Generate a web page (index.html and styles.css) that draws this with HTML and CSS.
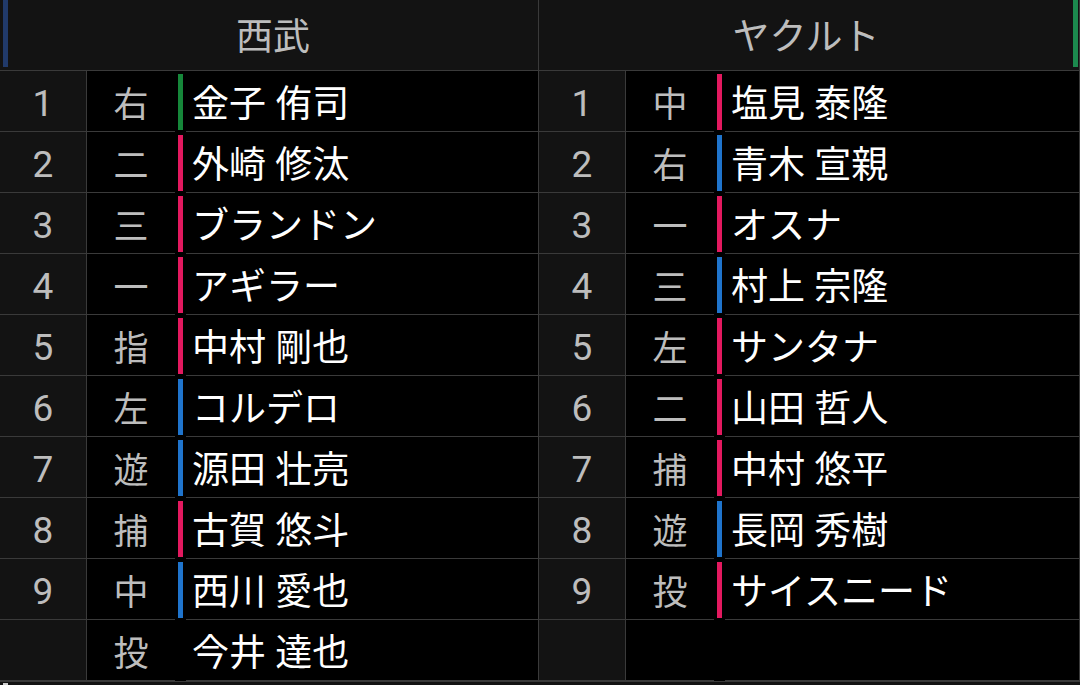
FILE: index.html
```html
<!DOCTYPE html>
<html lang="ja">
<head>
<meta charset="utf-8">
<link rel="stylesheet" href="styles.css">
</head>
<body>
<div class="board">
  <section class="team team-left">
    <header class="team-head">
      <span class="head-bar head-bar-navy"></span>
      <span class="head-name">西武</span>
    </header>
    <div class="row"><span class="num">1</span><span class="pos">右</span><span class="bar-cell"><i class="bar green"></i></span><span class="name">金子 侑司</span></div>
    <div class="row"><span class="num">2</span><span class="pos">二</span><span class="bar-cell"><i class="bar pink"></i></span><span class="name">外崎 修汰</span></div>
    <div class="row"><span class="num">3</span><span class="pos">三</span><span class="bar-cell"><i class="bar pink"></i></span><span class="name">ブランドン</span></div>
    <div class="row"><span class="num">4</span><span class="pos">一</span><span class="bar-cell"><i class="bar pink"></i></span><span class="name">アギラー</span></div>
    <div class="row"><span class="num">5</span><span class="pos">指</span><span class="bar-cell"><i class="bar pink"></i></span><span class="name">中村 剛也</span></div>
    <div class="row"><span class="num">6</span><span class="pos">左</span><span class="bar-cell"><i class="bar blue"></i></span><span class="name">コルデロ</span></div>
    <div class="row"><span class="num">7</span><span class="pos">遊</span><span class="bar-cell"><i class="bar blue"></i></span><span class="name">源田 壮亮</span></div>
    <div class="row"><span class="num">8</span><span class="pos">捕</span><span class="bar-cell"><i class="bar pink"></i></span><span class="name">古賀 悠斗</span></div>
    <div class="row"><span class="num">9</span><span class="pos">中</span><span class="bar-cell"><i class="bar blue"></i></span><span class="name">西川 愛也</span></div>
    <div class="row"><span class="num"></span><span class="pos">投</span><span class="bar-cell"></span><span class="name">今井 達也</span></div>
  </section>
  <section class="team team-right">
    <header class="team-head">
      <span class="head-name">ヤクルト</span>
      <span class="head-bar head-bar-green"></span>
    </header>
    <div class="row"><span class="num">1</span><span class="pos">中</span><span class="bar-cell"><i class="bar pink"></i></span><span class="name">塩見 泰隆</span></div>
    <div class="row"><span class="num">2</span><span class="pos">右</span><span class="bar-cell"><i class="bar blue"></i></span><span class="name">青木 宣親</span></div>
    <div class="row"><span class="num">3</span><span class="pos">一</span><span class="bar-cell"><i class="bar pink"></i></span><span class="name">オスナ</span></div>
    <div class="row"><span class="num">4</span><span class="pos">三</span><span class="bar-cell"><i class="bar blue"></i></span><span class="name">村上 宗隆</span></div>
    <div class="row"><span class="num">5</span><span class="pos">左</span><span class="bar-cell"><i class="bar pink"></i></span><span class="name">サンタナ</span></div>
    <div class="row"><span class="num">6</span><span class="pos">二</span><span class="bar-cell"><i class="bar pink"></i></span><span class="name">山田 哲人</span></div>
    <div class="row"><span class="num">7</span><span class="pos">捕</span><span class="bar-cell"><i class="bar pink"></i></span><span class="name">中村 悠平</span></div>
    <div class="row"><span class="num">8</span><span class="pos">遊</span><span class="bar-cell"><i class="bar blue"></i></span><span class="name">長岡 秀樹</span></div>
    <div class="row"><span class="num">9</span><span class="pos">投</span><span class="bar-cell"><i class="bar pink"></i></span><span class="name">サイスニード</span></div>
    <div class="row"><span class="num"></span><span class="pos"></span><span class="bar-cell"></span><span class="name"></span></div>
  </section>
</div>
<div class="foot"><span class="foot-mark"></span></div>
</body>
</html>
```

FILE: styles.css
```css
html, body {
  margin: 0;
  padding: 0;
}

body {
  width: 1080px;
  height: 685px;
  overflow: hidden;
  background: #131313;
  font-family: Roboto, "Noto Sans CJK JP", sans-serif;
}

.board {
  display: flex;
  background: #000;
}

.team {
  display: flex;
  flex-direction: column;
  border-right: 1px solid #3a3a3a;
}

.team-left {
  width: 538px;
}

.team-right {
  width: 540px;
}

.team-head {
  height: 70px;
  display: flex;
  align-items: flex-start;
  background: #131313;
  border-bottom: 1px solid #3a3a3a;
}

.head-name {
  flex: 1;
  height: 67px;
  display: flex;
  align-items: center;
  justify-content: center;
  color: #bdbdbd;
  font-size: 37px;
}

.head-bar {
  width: 5px;
  height: 67px;
}

.head-bar-navy {
  margin-left: 3px;
  background: #213a6a;
}

.head-bar-green {
  margin-right: 1px;
  background: #1c8a4e;
}

.row {
  display: grid;
  grid-template-columns: 87px 88px 11px 1fr;
  height: 61px;
}

.row > span {
  display: flex;
  align-items: center;
  border-bottom: 1px solid #3a3a3a;
}

.num {
  justify-content: center;
  background: #131313;
  border-right: 1px solid #3a3a3a;
  color: #bdbdbd;
  font-size: 37px;
  padding-top: 4px;
}

.pos {
  justify-content: center;
  color: #bdbdbd;
  font-size: 35px;
  padding-top: 1px;
}

.row > .bar-cell {
  border-bottom: none;
  background: #000;
  padding: 3px 0 2px 3px;
  align-items: stretch;
}

.bar {
  width: 5px;
}

.green { background: #16873a; }
.pink { background: #e3195f; }
.blue { background: #1f74cc; }

.name {
  padding-left: 6px;
  color: #fff;
  font-size: 37px;
  white-space: nowrap;
}

.foot {
  height: 4px;
  border-top: 1px solid #3a3a3a;
  position: relative;
}

.foot-mark {
  position: absolute;
  left: 3px;
  top: 1px;
  width: 5px;
  height: 3px;
  background: #cfcfcf;
}
```
